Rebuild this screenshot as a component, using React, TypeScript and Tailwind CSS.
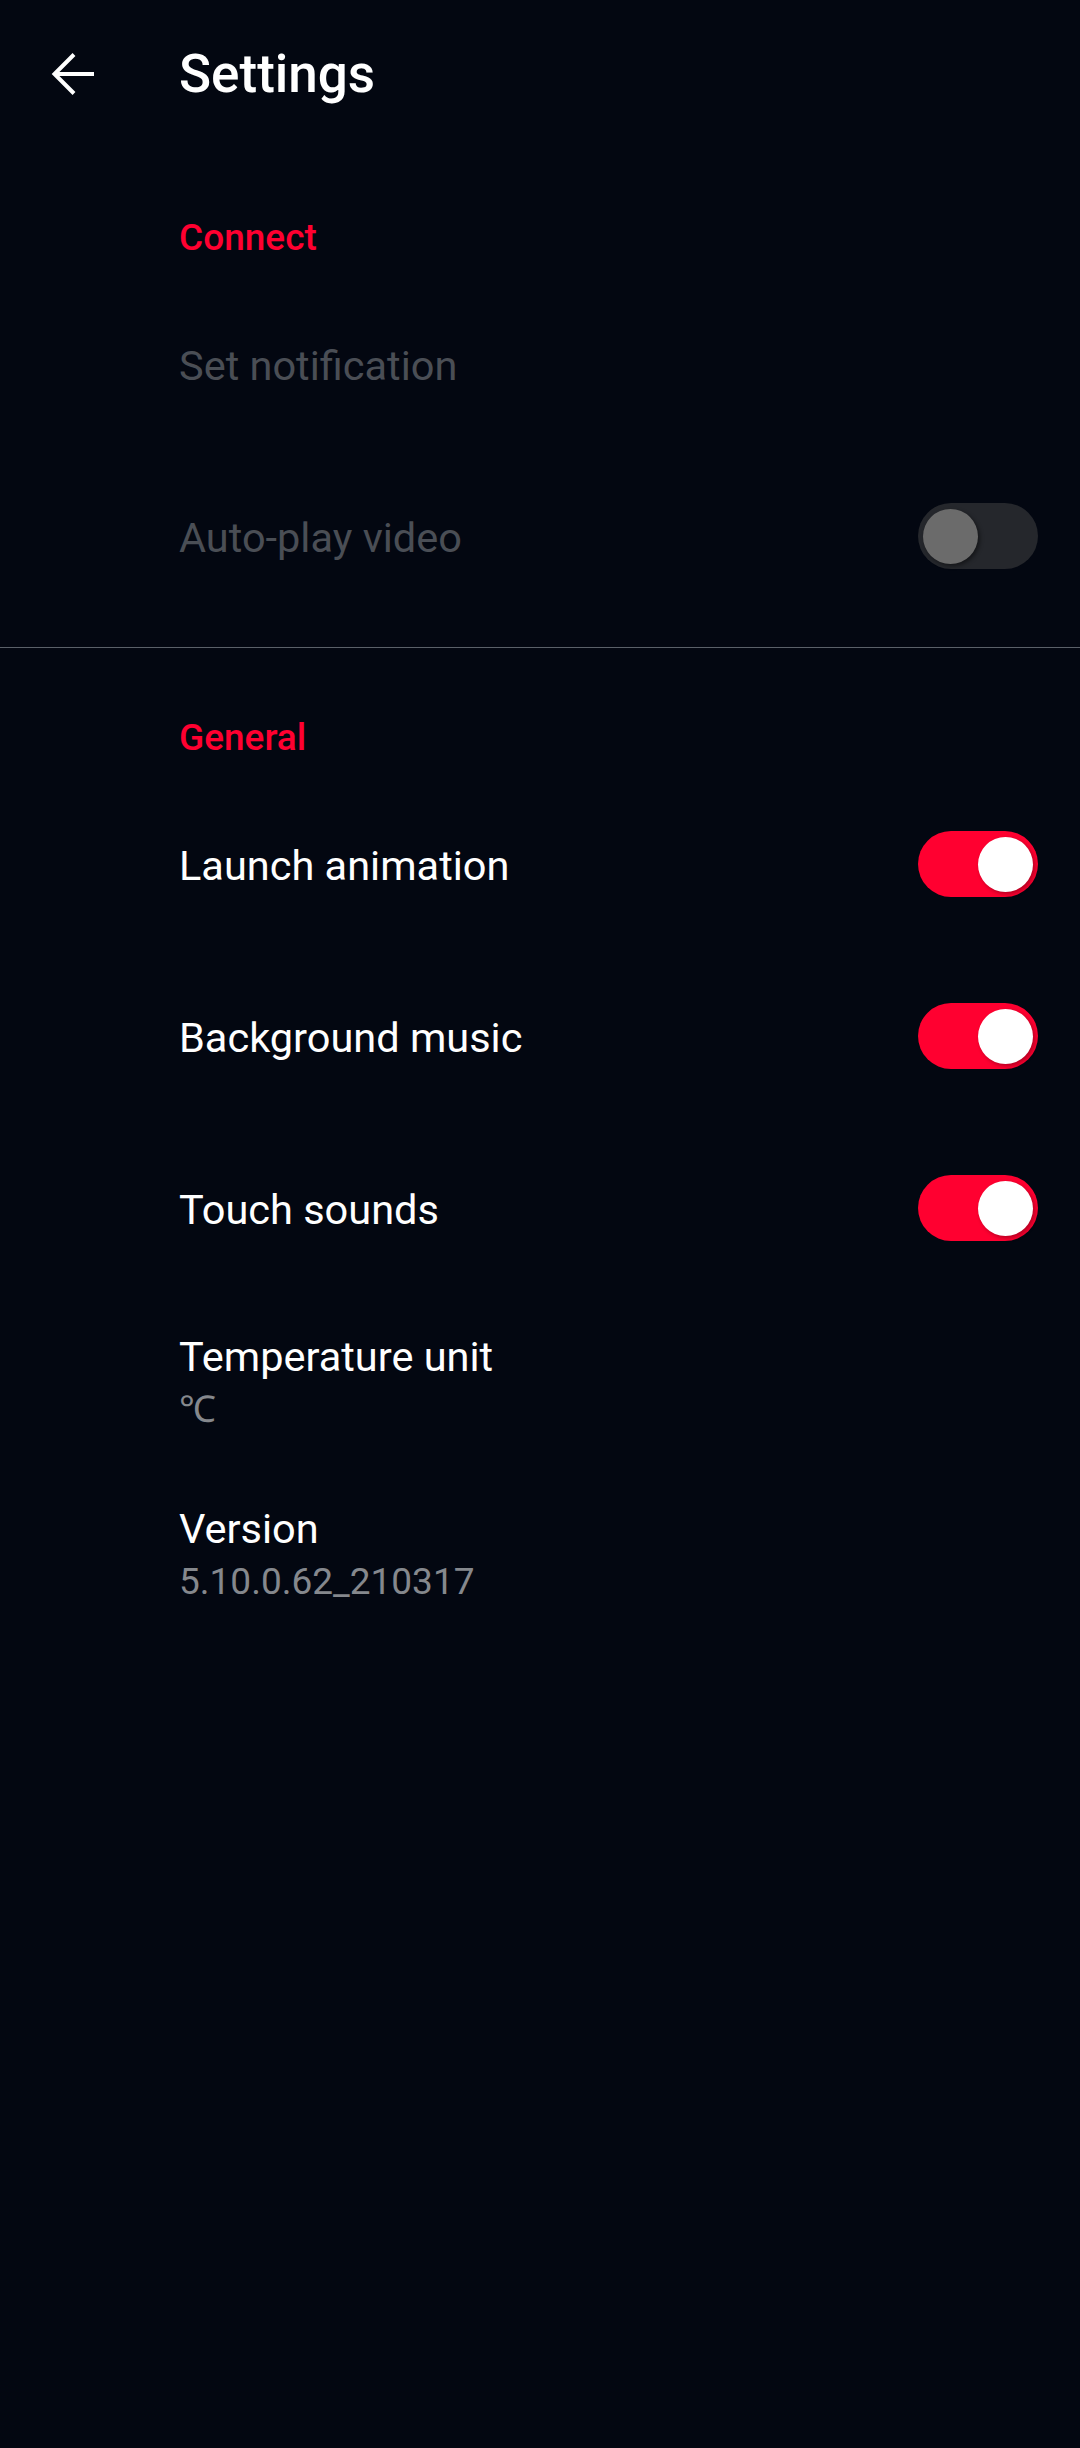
import { useState } from "react";

const font = { fontFamily: "Roboto, 'Noto Sans', sans-serif" };

function Toggle({ on, disabled }: { on: boolean; disabled?: boolean }) {
  if (disabled) {
    return (
      <div className="w-[120px] h-[66px] mb-[4px] rounded-full bg-[#25272c] flex items-center px-[5px] shrink-0">
        <div className="w-[55px] h-[55px] rounded-full bg-[#6b6b6b] shadow-[2px_2px_4px_rgba(0,0,0,0.45)]" />
      </div>
    );
  }
  return (
    <div
      className={
        on
          ? "w-[120px] h-[66px] mb-[4px] rounded-full bg-[#ff0030] flex items-center justify-end px-[5px] shrink-0"
          : "w-[120px] h-[66px] mb-[4px] rounded-full bg-[#25272c] flex items-center px-[5px] shrink-0"
      }
    >
      <div className="w-[55px] h-[55px] rounded-full bg-white shadow-[2px_2px_4px_rgba(0,0,0,0.3)]" />
    </div>
  );
}

function Category({ title }: { title: string }) {
  return (
    <div className="h-[132px] flex items-end pb-[21px] pl-[179px]">
      <span className="text-[37px] leading-[42px] font-medium text-[#ff0030]">{title}</span>
    </div>
  );
}

function SwitchRow({
  label,
  on,
  disabled,
}: {
  label: string;
  on?: boolean;
  disabled?: boolean;
}) {
  return (
    <div className="h-[172px] flex items-center justify-between pl-[179px] pr-[42px]">
      <span
        className={
          disabled
            ? "text-[41.5px] leading-[50px] text-[#4a4e55]"
            : "text-[41.5px] leading-[50px] text-white"
        }
      >
        {label}
      </span>
      {on !== undefined && <Toggle on={on} disabled={disabled} />}
    </div>
  );
}

function InfoRow({ label, value }: { label: string; value: string }) {
  return (
    <div className="h-[172px] flex flex-col justify-center pl-[179px] pr-[42px]">
      <span className="text-[41.5px] leading-[50px] text-white">{label}</span>
      <span className="mt-[6px] text-[37px] leading-[44px] text-[#85888d]">{value}</span>
    </div>
  );
}

export default function App() {
  const [general] = useState([
    { label: "Launch animation", on: true },
    { label: "Background music", on: true },
    { label: "Touch sounds", on: true },
  ]);

  return (
    <div className="w-[1080px] h-[2448px] bg-[#030711] overflow-hidden" style={font}>
      {/* top bar */}
      <div className="h-[148px] flex items-center">
        <div className="w-[179px] flex items-center pl-[51px]">
          <svg width="44" height="44" viewBox="0 0 44 44" fill="none">
            <path d="M43 22H4" stroke="white" strokeWidth="4" />
            <path d="M23 2.5L3.5 22L23 41.5" stroke="white" strokeWidth="4" />
          </svg>
        </div>
        <h1 className="text-[53px] leading-[60px] font-medium text-white">Settings</h1>
      </div>

      <Category title="Connect" />
      <SwitchRow label="Set notification" disabled />
      <SwitchRow label="Auto-play video" on={false} disabled />

      <div className="mt-[23px] h-px bg-[#5a6068]" />

      <Category title="General" />
      {general.map((g) => (
        <SwitchRow key={g.label} label={g.label} on={g.on} />
      ))}
      <InfoRow label="Temperature unit" value="℃" />
      <InfoRow label="Version" value="5.10.0.62_210317" />
    </div>
  );
}
